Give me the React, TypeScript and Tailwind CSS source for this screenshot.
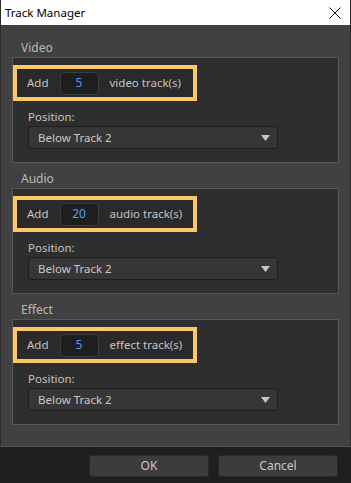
import React from "react";

const sections = [
  { title: "Video", count: "5", kind: "video track(s)", first: true },
  { title: "Audio", count: "20", kind: "audio track(s)", first: false },
  { title: "Effect", count: "5", kind: "effect track(s)", first: false },
];

function Section({ title, count, kind, first }: { title: string; count: string; kind: string; first: boolean }) {
  return (
    <div>
      <div className={`${first ? "h-[32px]" : "h-[25px]"} flex items-end pl-[9px] pb-[1px] text-[12px] leading-[16px] text-[#b9b9b9]`}>
        {title}
      </div>
      <div className="border border-[#585858] bg-[#2e2e2e] pt-[7px] pb-[13px]">
        <div className="flex items-center h-[36px] w-[184px] border-[4px] border-[#fcc867] bg-[#2a2a2a] pl-[10px] text-[11.5px] text-[#c4c4c4]">
          <span>Add</span>
          <div className="ml-[11px] w-[39px] h-[23px] rounded-[4px] border border-[#3c3c3c] bg-[#1e1e1e] flex items-center justify-center text-[12px] text-[#4d9bff]">
            {count}
          </div>
          <span className="ml-[11px]">{kind}</span>
        </div>
        <div className="pl-[15px] pt-[8px]">
          <div className="h-[15px] mb-[2px] text-[11.5px] leading-[15px] text-[#c4c4c4]">Position:</div>
          <div className="w-[250px] h-[23px] rounded-[3px] border border-[#1c1c1c] bg-[#363636] flex items-center pl-[9px] pr-[7px] text-[11.5px] text-[#c8c8c8]">
            <span className="flex-1">Below Track 2</span>
            <svg width="9" height="6" viewBox="0 0 9 6">
              <polygon points="0,0 9,0 4.5,6" fill="#c6c6c6" />
            </svg>
          </div>
        </div>
      </div>
    </div>
  );
}

export default function App() {
  return (
    <div className="w-[351px] h-[483px] overflow-hidden flex flex-col bg-[#1f1f1f]" style={{ fontFamily: '"Noto Sans", "Open Sans", sans-serif' }}>
      <div className="h-[25px] shrink-0 bg-white flex items-center justify-between pl-[4px] pr-[9px] border-x border-[#2b2b2b]">
        <span className="text-[11.5px] text-black">Track Manager</span>
        <svg width="12" height="12" viewBox="0 0 12 12">
          <path d="M0.5 0.5 L11.5 11.5 M11.5 0.5 L0.5 11.5" stroke="#111" strokeWidth="1" />
        </svg>
      </div>
      <div className="bg-[#414141] border-x border-[#2b2b2b] pl-[11px] pr-[11px] pb-[21px]">
        {sections.map((s) => (
          <Section key={s.title} {...s} />
        ))}
      </div>
      <div className="border-t border-[#555555] bg-[#1f1f1f] flex justify-end gap-[9px] pr-[13px] pt-[8px]">
        <button className="w-[120px] h-[22px] rounded-[3px] border border-[#2a2a2a] bg-[#3c3c3c] text-[12px] text-[#c8c8c8]">OK</button>
        <button className="w-[120px] h-[22px] rounded-[3px] border border-[#2a2a2a] bg-[#3c3c3c] text-[12px] text-[#c8c8c8]">Cancel</button>
      </div>
      <div className="flex text-[11px] leading-[12px] font-semibold text-[#55606c] mt-[5px]">
        <span className="ml-[69px]">SHOOTS</span>
        <span className="ml-[115px]">OUTING</span>
      </div>
    </div>
  );
}
